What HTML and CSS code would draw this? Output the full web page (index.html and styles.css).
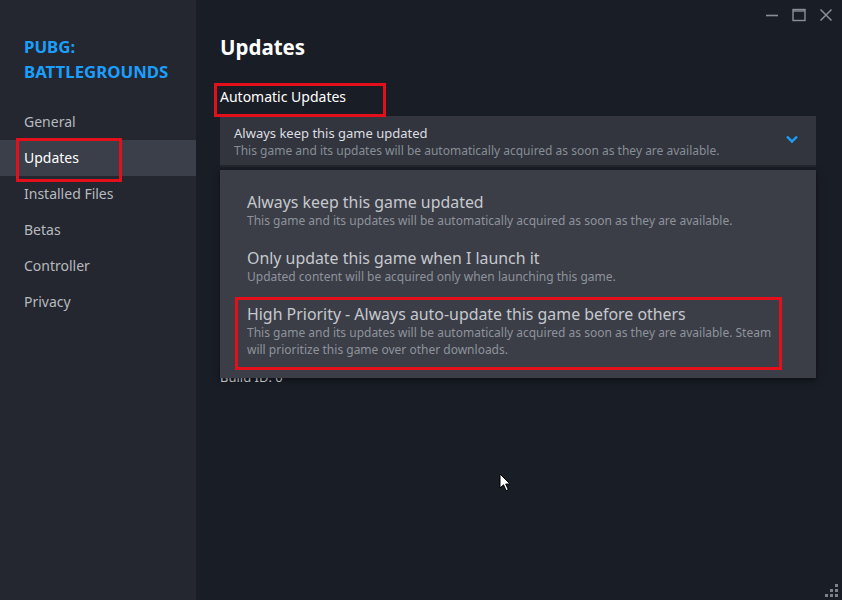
FILE: index.html
```html
<!DOCTYPE html>
<html>
<head>
<meta charset="utf-8">
<link rel="stylesheet" href="styles.css">
</head>
<body>
<div class="window">
  <aside class="sidebar">
    <div class="game-title">PUBG:<br>BATTLEGROUNDS</div>
    <nav class="nav">
      <div class="nav-item">General</div>
      <div class="nav-item active">Updates</div>
      <div class="nav-item">Installed Files</div>
      <div class="nav-item">Betas</div>
      <div class="nav-item">Controller</div>
      <div class="nav-item">Privacy</div>
    </nav>
    <div class="mark mark-nav"></div>
  </aside>
  <main class="main">
    <div class="controls">
      <svg width="14" height="14" viewBox="0 0 14 14"><path d="M1 7.5h12" stroke="#8a8f98" stroke-width="1.6"/></svg>
      <svg width="14" height="14" viewBox="0 0 14 14"><rect x="1" y="1.5" width="12" height="11" fill="none" stroke="#8a8f98" stroke-width="1.4"/><path d="M1 3h12" stroke="#8a8f98" stroke-width="1.4"/></svg>
      <svg width="14" height="14" viewBox="0 0 14 14"><path d="M1.5 1.5l11 11M12.5 1.5l-11 11" stroke="#8a8f98" stroke-width="1.5"/></svg>
    </div>
    <h1 class="heading">Updates</h1>
    <div class="section-label">Automatic Updates</div>
    <div class="dropdown">
      <div class="dd-text">
        <div class="dd-title">Always keep this game updated</div>
        <div class="dd-desc">This game and its updates will be automatically acquired as soon as they are available.</div>
      </div>
      <svg class="chev" width="14" height="10" viewBox="0 0 14 10"><path d="M2 2.5l5 5 5-5" fill="none" stroke="#1a9fff" stroke-width="2.4"/></svg>
    </div>
    <div class="hidden-area"></div>
    <div class="build">Build ID: 0</div>

    <div class="menu">
      <div class="menu-item">
        <div class="mi-title">Always keep this game updated</div>
        <div class="mi-desc">This game and its updates will be automatically acquired as soon as they are available.</div>
      </div>
      <div class="menu-item">
        <div class="mi-title">Only update this game when I launch it</div>
        <div class="mi-desc">Updated content will be acquired only when launching this game.</div>
      </div>
      <div class="menu-item hi">
        <div class="mi-title">High Priority - Always auto-update this game before others</div>
        <div class="mi-desc">This game and its updates will be automatically acquired as soon as they are available. Steam will prioritize this game over other downloads.</div>
      </div>
    </div>
    <div class="mark mark-label"></div>
    <div class="mark mark-hi"></div>

    <svg class="cursor" width="13" height="19" viewBox="0 0 13 19"><path d="M1 1v14l3.5-3.2 2.6 5.8 2.2-1-2.6-5.6H11z" fill="#fff" stroke="#000" stroke-width="1"/></svg>
    <div class="grip">
      <span></span><span></span><span></span><span></span><span></span><span></span>
    </div>
  </main>
</div>
</body>
</html>
```
FILE: styles.css
```css
* { box-sizing: border-box; }
html, body { margin: 0; padding: 0; }
body {
  width: 842px;
  height: 600px;
  overflow: hidden;
  background: #191d25;
  font-family: "Noto Sans", "Open Sans", sans-serif;
}
.window {
  display: flex;
  width: 842px;
  height: 600px;
}
.sidebar {
  position: relative;
  width: 196px;
  flex: none;
  background: #24272f;
  padding-top: 34px;
}
.game-title {
  color: #1a9fff;
  font-weight: 700;
  font-size: 16.8px;
  line-height: 25px;
  padding-left: 24px;
}
.nav {
  margin-top: 20px;
  display: flex;
  flex-direction: column;
}
.nav-item {
  height: 36px;
  line-height: 35px;
  padding-left: 24px;
  color: #b6babf;
  font-size: 14px;
}
.nav-item.active {
  background: #3a3f4a;
  color: #ffffff;
}
.main {
  position: relative;
  flex: 1;
  padding: 0 26px 0 24px;
}
.controls {
  position: absolute;
  top: 8px;
  right: 9px;
  display: flex;
  gap: 13px;
}
.heading {
  margin: 33px 0 0;
  color: #ffffff;
  font-size: 20.5px;
  font-weight: 700;
  line-height: 28px;
}
.section-label {
  margin-top: 26px;
  color: #ffffff;
  font-size: 14px;
  line-height: 20px;
}
.dropdown {
  margin-top: 9px;
  height: 51px;
  background: #32353d;
  display: flex;
  align-items: center;
  padding: 3px 17px 0 14px;
  border-bottom: 2px solid #23262d;
}
.dd-text { flex: 1; }
.dd-title {
  color: #dcdee2;
  font-size: 13px;
  line-height: 17px;
}
.dd-desc {
  color: #878d96;
  font-size: 12px;
  line-height: 17px;
}
.chev { flex: none; margin-bottom: 6px; }
.hidden-area { height: 202px; }
.build {
  color: #dcdee2;
  font-size: 13px;
  line-height: 16px;
}
.menu {
  position: absolute;
  left: 24px;
  top: 170px;
  width: 596px;
  height: 208px;
  background: #3b3e47;
  padding: 19px 0 0 0;
  box-shadow: 0 2px 6px rgba(0,0,0,0.5);
}
.menu-item {
  padding: 3px 14px 0 27px;
  height: 56px;
}
.mi-title {
  color: #c6c9ce;
  font-size: 15.9px;
  line-height: 20px;
}
.mi-desc {
  color: #8e939b;
  font-size: 12px;
  line-height: 17px;
}
.menu-item.hi { padding-right: 30px; }
.mark {
  position: absolute;
  border: 3px solid #e3101b;
}
.mark-nav { left: 16px; top: 138px; width: 106px; height: 44px; }
.mark-label { left: 18px; top: 83px; width: 172px; height: 34px; }
.mark-hi { left: 39px; top: 297px; width: 547px; height: 73px; }
.cursor { position: absolute; left: 303px; top: 473px; }
.grip {
  position: absolute;
  right: 4px;
  bottom: 3px;
  width: 14px;
  height: 14px;
}
.grip span {
  position: absolute;
  width: 3px;
  height: 3px;
  background: #7d828a;
}
.grip span:nth-child(1) { right: 0; bottom: 0; }
.grip span:nth-child(2) { right: 5px; bottom: 0; }
.grip span:nth-child(3) { right: 10px; bottom: 0; }
.grip span:nth-child(4) { right: 0; bottom: 5px; }
.grip span:nth-child(5) { right: 5px; bottom: 5px; }
.grip span:nth-child(6) { right: 0; bottom: 10px; }
```
